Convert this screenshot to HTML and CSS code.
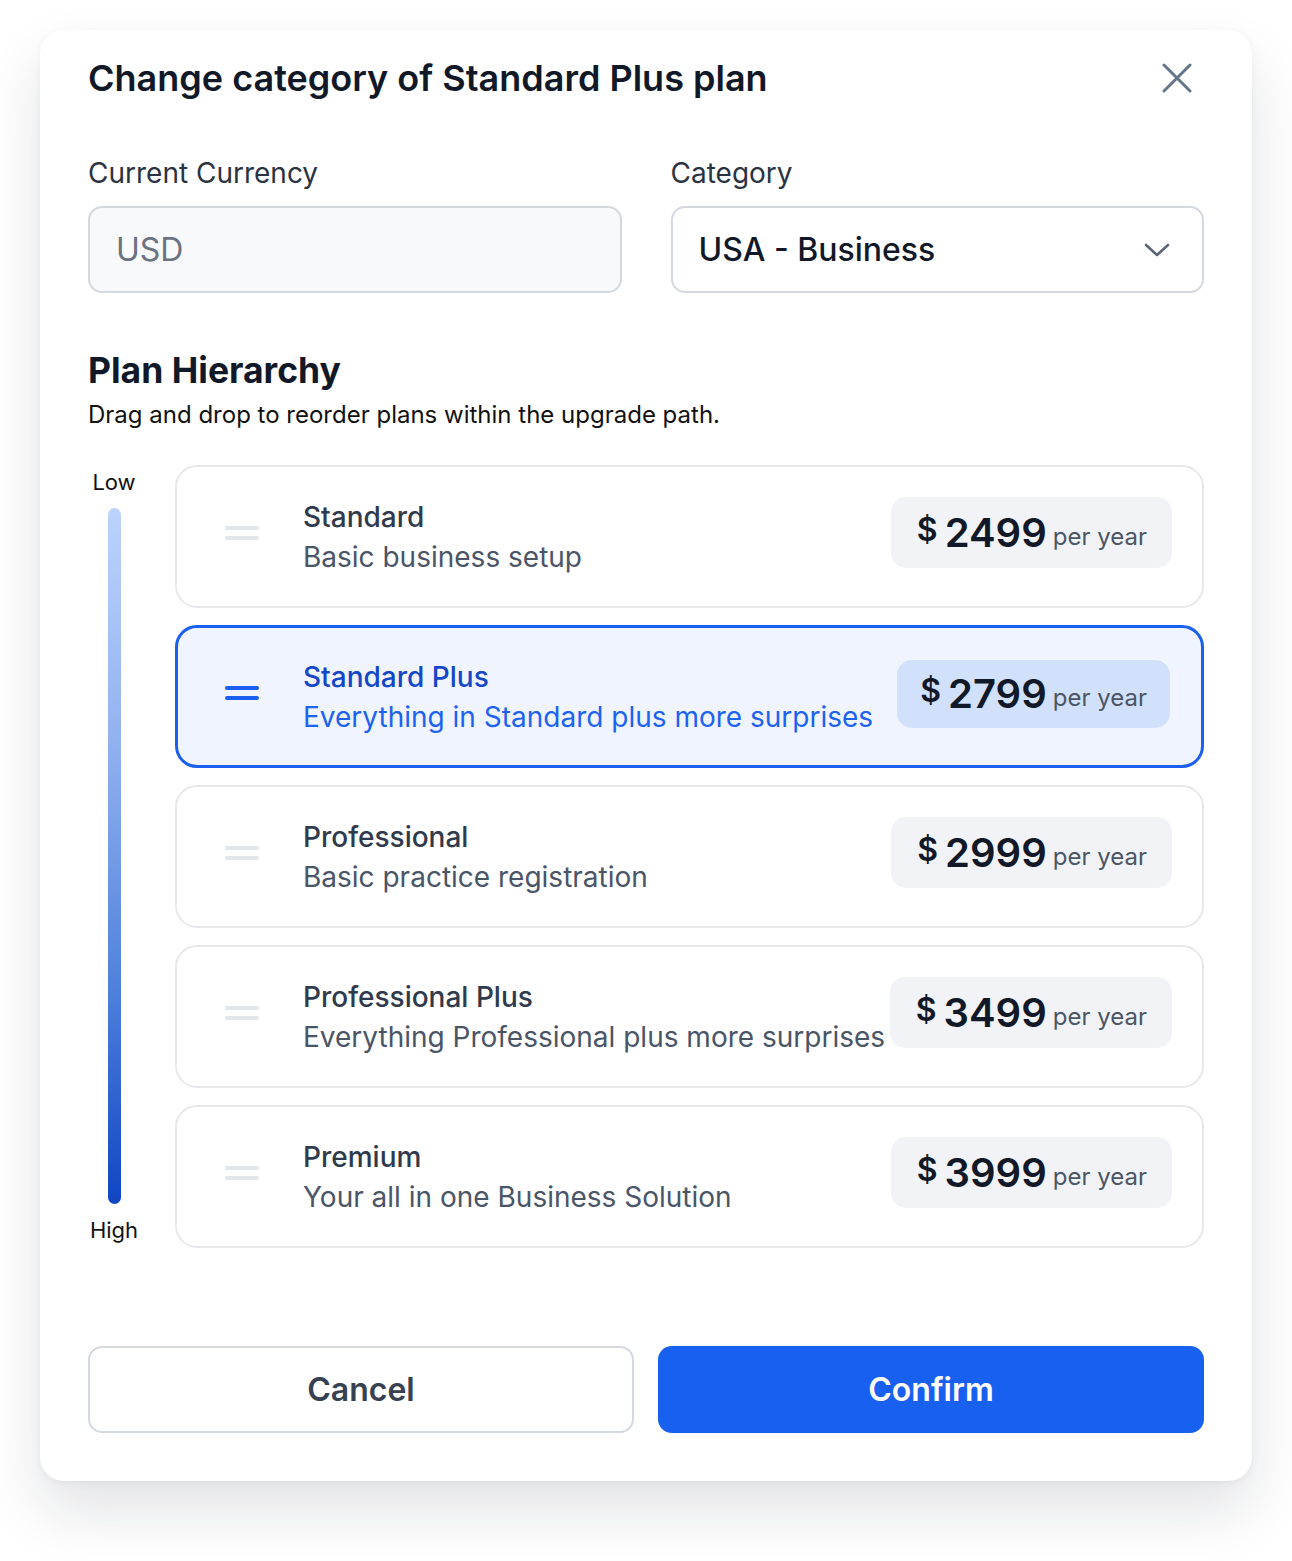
FILE: index.html
```html
<!DOCTYPE html>
<html lang="en">
<head>
<meta charset="utf-8">
<title>Change category</title>
<link rel="stylesheet" href="styles.css">
</head>
<body>
<div class="modal">
  <div class="modal-head">
    <h1 class="modal-title">Change category of Standard Plus plan</h1>
    <button class="close" aria-label="Close">
      <svg width="30" height="30" viewBox="0 0 30 30"><path d="M2 2 L28 28 M28 2 L2 28" stroke="#64748b" stroke-width="3" stroke-linecap="round" fill="none"/></svg>
    </button>
  </div>

  <div class="fields">
    <div class="field">
      <label class="label">Current Currency</label>
      <div class="input input-disabled">USD</div>
    </div>
    <div class="field">
      <label class="label">Category</label>
      <div class="input input-select">
        <span>USA - Business</span>
        <svg width="26" height="16" viewBox="0 0 26 16"><path d="M2 3 L13 13 L24 3" stroke="#5b6577" stroke-width="2.6" stroke-linecap="round" stroke-linejoin="round" fill="none"/></svg>
      </div>
    </div>
  </div>

  <h2 class="section-title">Plan Hierarchy</h2>
  <p class="section-sub">Drag and drop to reorder plans within the upgrade path.</p>

  <div class="hierarchy">
    <div class="scale">
      <span class="scale-label">Low</span>
      <div class="scale-bar"></div>
      <span class="scale-label">High</span>
    </div>
    <div class="plans">
      <div class="plan">
        <div class="handle"><i></i><i></i></div>
        <div class="plan-text">
          <div class="plan-name">Standard</div>
          <div class="plan-desc">Basic business setup</div>
        </div>
        <div class="price"><span class="cur">$</span><span class="amt">2499</span><span class="per">per year</span></div>
      </div>
      <div class="plan plan-active">
        <div class="handle"><i></i><i></i></div>
        <div class="plan-text">
          <div class="plan-name">Standard Plus</div>
          <div class="plan-desc">Everything in Standard plus more surprises</div>
        </div>
        <div class="price"><span class="cur">$</span><span class="amt">2799</span><span class="per">per year</span></div>
      </div>
      <div class="plan">
        <div class="handle"><i></i><i></i></div>
        <div class="plan-text">
          <div class="plan-name">Professional</div>
          <div class="plan-desc">Basic practice registration</div>
        </div>
        <div class="price"><span class="cur">$</span><span class="amt">2999</span><span class="per">per year</span></div>
      </div>
      <div class="plan">
        <div class="handle"><i></i><i></i></div>
        <div class="plan-text">
          <div class="plan-name">Professional Plus</div>
          <div class="plan-desc">Everything Professional plus more surprises</div>
        </div>
        <div class="price"><span class="cur">$</span><span class="amt">3499</span><span class="per">per year</span></div>
      </div>
      <div class="plan">
        <div class="handle"><i></i><i></i></div>
        <div class="plan-text">
          <div class="plan-name">Premium</div>
          <div class="plan-desc">Your all in one Business Solution</div>
        </div>
        <div class="price"><span class="cur">$</span><span class="amt">3999</span><span class="per">per year</span></div>
      </div>
    </div>
  </div>

  <div class="actions">
    <button class="btn btn-cancel">Cancel</button>
    <button class="btn btn-confirm">Confirm</button>
  </div>
</div>
</body>
</html>
```

FILE: styles.css
```css
* { box-sizing: border-box; }
html, body { margin: 0; padding: 0; background: #ffffff; }
body {
  font-family: Inter, "Noto Sans", "Liberation Sans", sans-serif;
  color: #111827;
  padding: 30px 40px;
  min-height: 1561px;
}
.modal {
  width: 1212px;
  background: #fff;
  border-radius: 24px;
  padding: 28px 48px 48px;
  box-shadow: 0 30px 60px rgba(17, 24, 39, 0.12), 0 2px 8px rgba(17, 24, 39, 0.05);
}
.modal-head {
  display: flex;
  align-items: center;
  justify-content: space-between;
}
.modal-title {
  margin: 0;
  font-size: 36px;
  line-height: 40px;
  font-weight: 600;
  color: #111827;
}
.close {
  border: 0;
  background: none;
  padding: 0;
  margin-right: 12px;
  width: 30px;
  height: 30px;
  display: flex;
}
.fields {
  display: grid;
  grid-template-columns: 1fr 1fr;
  gap: 49px;
  margin-top: 59px;
}
.field { display: flex; flex-direction: column; gap: 17px; }
.label {
  font-size: 28px;
  line-height: 32px;
  color: #2a3342;
}
.input {
  height: 87px;
  border: 2px solid #d4d8df;
  border-radius: 14px;
  display: flex;
  align-items: center;
  padding: 0 26px;
  font-size: 32px;
}
.input-disabled { background: #f8f9fb; color: #6b7280; }
.input-select {
  justify-content: space-between;
  color: #111827;
  font-weight: 500;
  padding-right: 32px;
}
.section-title {
  margin: 58px 0 0;
  font-size: 35.5px;
  line-height: 40px;
  font-weight: 700;
  color: #111827;
}
.section-sub {
  margin: 10px 0 0;
  font-size: 24px;
  line-height: 28px;
  color: #111;
}
.hierarchy {
  display: flex;
  gap: 35px;
  margin-top: 36px;
}
.scale {
  flex: none;
  width: 52px;
  display: flex;
  flex-direction: column;
  align-items: center;
  padding: 3px 0 4px;
  gap: 12px;
}
.scale-label {
  font-size: 22px;
  line-height: 28px;
  color: #111;
}
.scale-bar {
  flex: 1;
  width: 13px;
  border-radius: 7px;
  background: linear-gradient(to bottom, #bcd3fd 0%, #8fb0ef 35%, #4d7fdc 70%, #0f45c2 100%);
}
.plans {
  flex: 1;
  min-width: 0;
  display: flex;
  flex-direction: column;
  gap: 17px;
}
.plan {
  height: 143px;
  border: 2px solid #e7e8ec;
  border-radius: 22px;
  display: flex;
  align-items: center;
  padding: 0 30px 0 48px;
  background: #fff;
}
.plan-active {
  border: 3px solid #1a5ff0;
  background: #eff4fe;
  padding: 0 31px 0 47px;
}
.handle {
  flex: none;
  width: 34px;
  display: flex;
  flex-direction: column;
  gap: 6px;
  margin-right: 44px;
  margin-bottom: 8px;
}
.handle i {
  display: block;
  height: 4px;
  border-radius: 2px;
  background: #e2e5ea;
}
.plan-active .handle i { background: #1a5ff0; }
.plan-text { flex: 1; min-width: 0; white-space: nowrap; margin-right: 8px; }
.plan-name {
  font-size: 28px;
  line-height: 40px;
  font-weight: 500;
  color: #2f3a4d;
}
.plan-desc {
  font-size: 28px;
  line-height: 40px;
  color: #4a5568;
}
.plan-active .plan-name { color: #1347c8; }
.plan-active .plan-desc { color: #1d63f0; }
.price {
  flex: none;
  display: flex;
  align-items: baseline;
  height: 71px;
  padding: 11px 25px 0 26px;
  border-radius: 15px;
  background: #f1f3f6;
  margin-bottom: 8px;
  white-space: nowrap;
}
.plan-active .price { background: #d2e1fb; margin-bottom: 6px; height: 68px; padding: 9px 23px 0 23px; }
.cur {
  font-size: 32px;
  font-weight: 600;
  color: #111827;
  position: relative;
  top: -6px;
  margin-right: 7px;
}
.amt {
  font-size: 40px;
  line-height: 50px;
  font-weight: 600;
  color: #111827;
  margin-right: 6px;
}
.per {
  font-size: 24px;
  color: #4b5563;
  position: relative;
  top: -2px;
}
.actions {
  display: grid;
  grid-template-columns: 1fr 1fr;
  gap: 24px;
  margin-top: 98px;
}
.btn {
  height: 87px;
  border-radius: 14px;
  font-family: inherit;
  font-size: 32px;
  font-weight: 600;
}
.btn-cancel {
  background: #fff;
  border: 2px solid #d4d8df;
  color: #374151;
}
.btn-confirm {
  background: #1861f0;
  border: 0;
  color: #fff;
}
```
